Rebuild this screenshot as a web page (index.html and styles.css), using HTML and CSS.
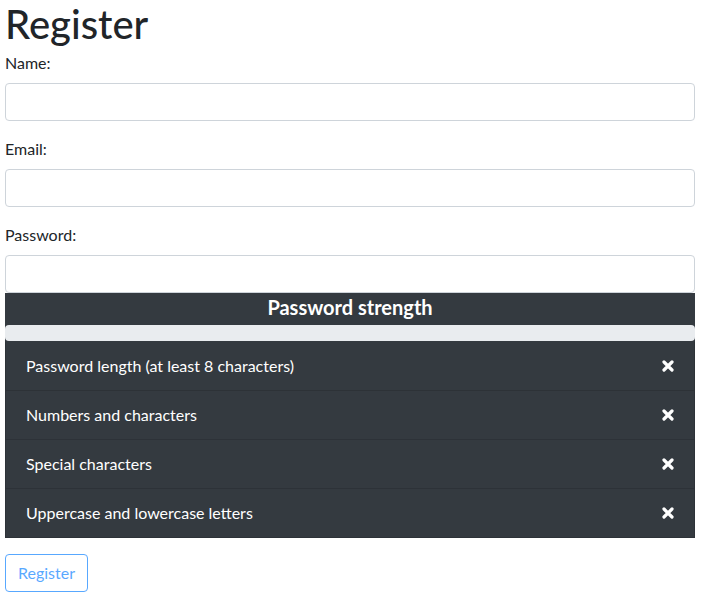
FILE: index.html
```html
<!DOCTYPE html>
<html>
<head>
<meta charset="utf-8">
<link rel="stylesheet" href="styles.css">
</head>
<body>
<div class="page">
  <h1 class="title">Register</h1>
  <form class="form">
    <div class="group">
      <label class="label">Name:</label>
      <input class="input" type="text">
    </div>
    <div class="group">
      <label class="label">Email:</label>
      <input class="input" type="email">
    </div>
    <div class="group">
      <label class="label">Password:</label>
      <input class="input" type="password">
      <div class="strength">
        <div class="strength-title">Password strength</div>
        <div class="progress"></div>
        <ul class="checks">
          <li class="check"><span>Password length (at least 8 characters)</span><svg class="x" viewBox="0 0 12 12"><path d="M2 2 L10 10 M10 2 L2 10" stroke="#fff" stroke-width="3.2" stroke-linecap="round"/></svg></li>
          <li class="check"><span>Numbers and characters</span><svg class="x" viewBox="0 0 12 12"><path d="M2 2 L10 10 M10 2 L2 10" stroke="#fff" stroke-width="3.2" stroke-linecap="round"/></svg></li>
          <li class="check"><span>Special characters</span><svg class="x" viewBox="0 0 12 12"><path d="M2 2 L10 10 M10 2 L2 10" stroke="#fff" stroke-width="3.2" stroke-linecap="round"/></svg></li>
          <li class="check"><span>Uppercase and lowercase letters</span><svg class="x" viewBox="0 0 12 12"><path d="M2 2 L10 10 M10 2 L2 10" stroke="#fff" stroke-width="3.2" stroke-linecap="round"/></svg></li>
        </ul>
      </div>
    </div>
    <button class="btn" type="button" disabled>Register</button>
  </form>
</div>
</body>
</html>
```
FILE: styles.css
```css
* { box-sizing: border-box; }
html, body { margin: 0; padding: 0; background: #fff; }
body {
  font-family: Lato, "Open Sans", sans-serif;
  font-size: 16px;
  line-height: 1.5;
  color: #212529;
}
.page { width: 690px; margin-left: 5px; }
.title {
  margin: 0 0 3px 0;
  font-size: 40px;
  font-weight: 500;
  line-height: 48px;
}
.form { margin: 0; }
.group { margin-bottom: 16px; }
.label { display: block; margin-bottom: 8px; line-height: 24px; }
.input {
  display: block;
  width: 100%;
  height: 38px;
  border: 1px solid #ced4da;
  border-radius: 4px;
  padding: 6px 12px;
  font: inherit;
  background: #fff;
}
.strength { background: #343a40; color: #fff; }
.strength-title {
  text-align: center;
  font-weight: 700;
  font-size: 20px;
  line-height: 28px;
  padding: 0 0 4px;
}
.progress {
  height: 16px;
  background: #e9ecef;
  border-radius: 4px;
}
.checks { list-style: none; margin: 0; padding: 0; }
.check {
  display: flex;
  justify-content: space-between;
  align-items: center;
  padding: 12px 20px;
  border: 1px solid rgba(0,0,0,0.125);
  border-top-width: 0;
  line-height: 24px;
}
.check:first-child { border-top-width: 1px; border-top-color: transparent; }
.x { width: 12px; height: 12px; }
.btn {
  font: inherit;
  color: #007bff;
  opacity: 0.65;
  background: transparent;
  border: 1px solid #007bff;
  border-radius: 4px;
  padding: 6px 12px;
  line-height: 24px;
}
```
